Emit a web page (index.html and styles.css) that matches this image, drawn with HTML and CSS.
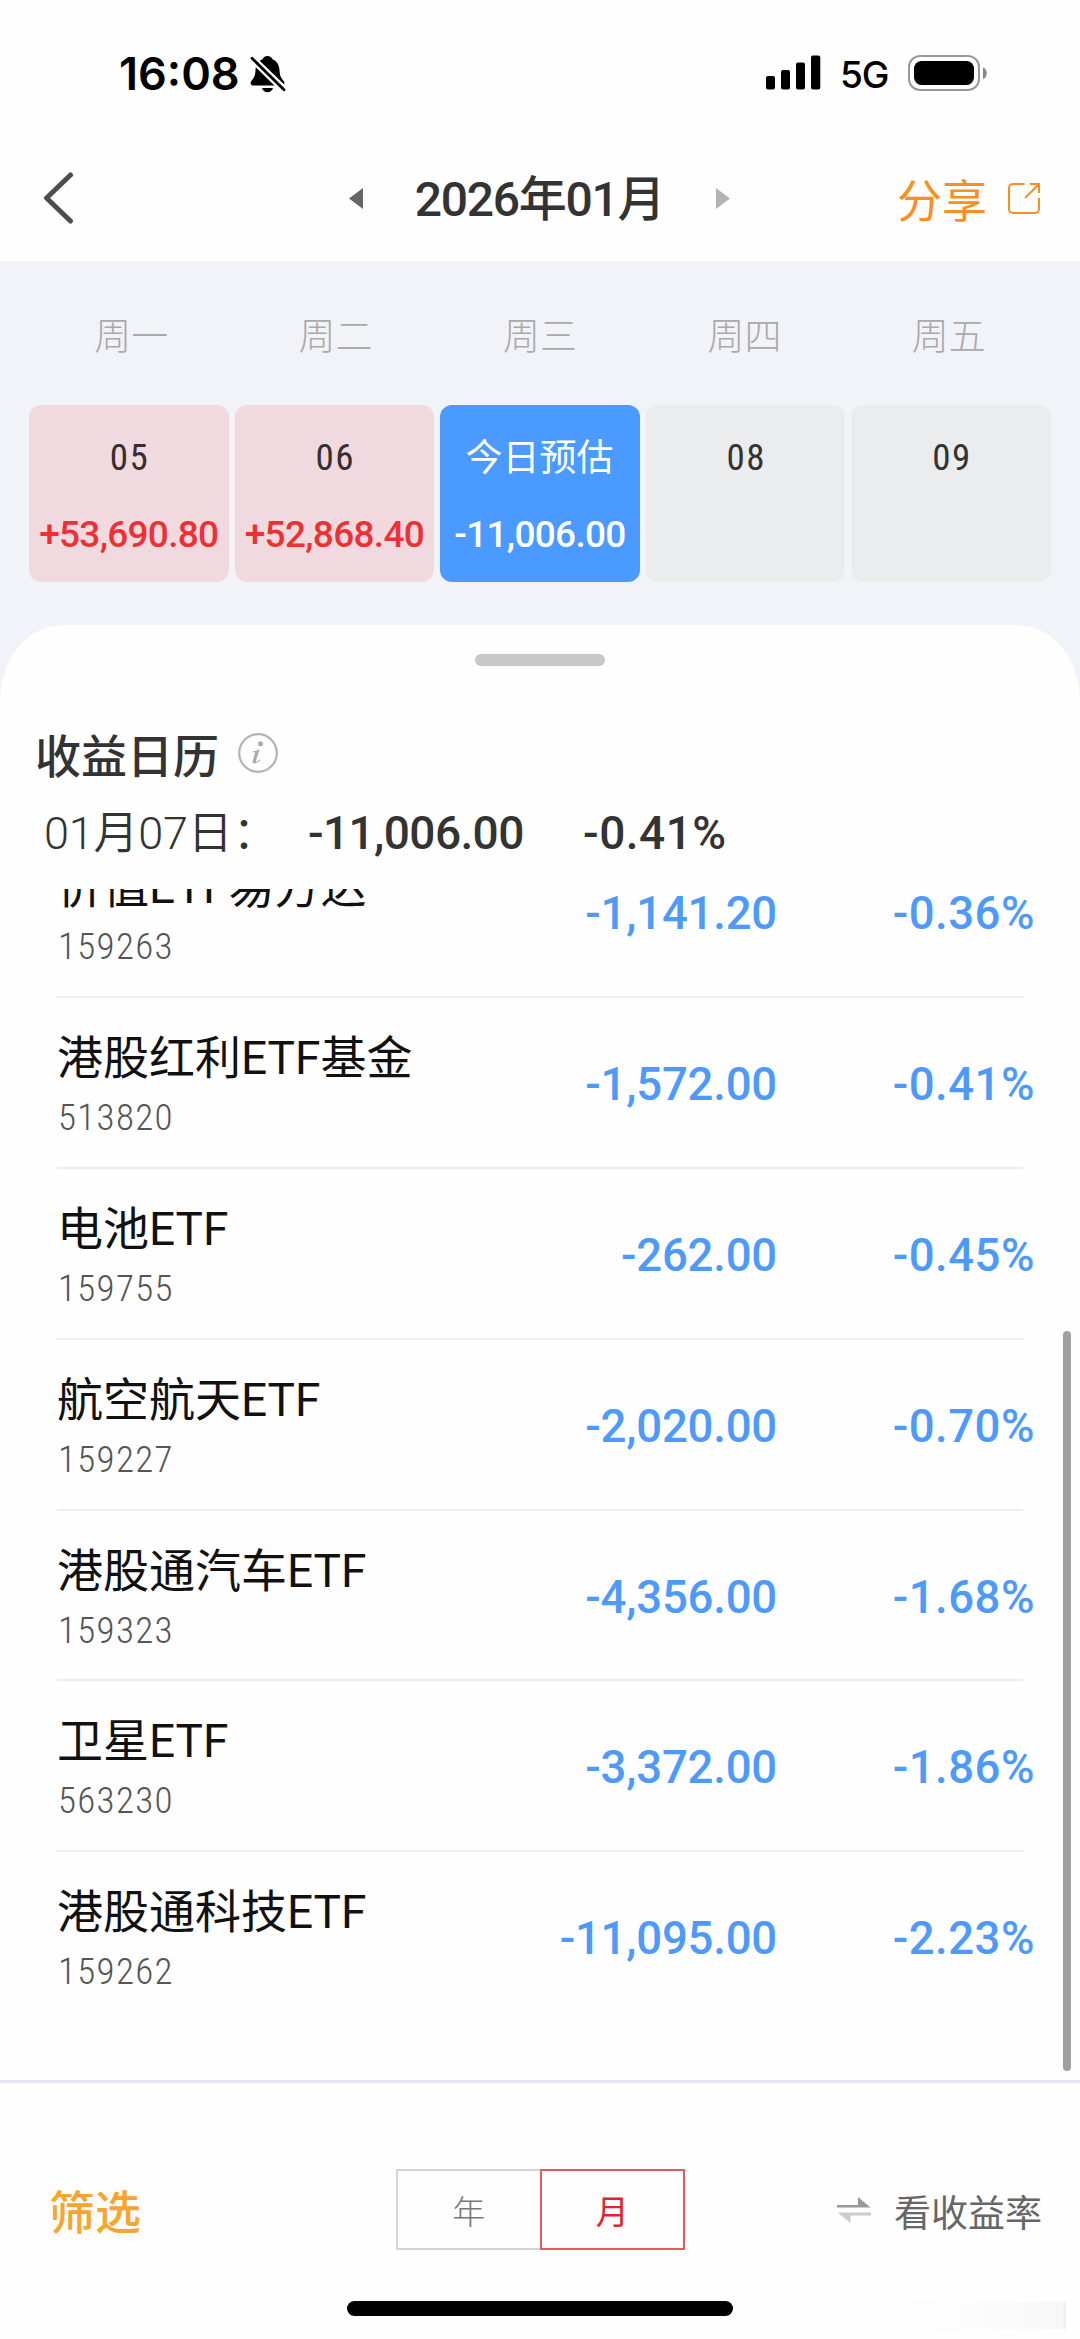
FILE: index.html
```html
<!DOCTYPE html>
<html lang="zh-CN">
<head>
<meta charset="utf-8">
<title>收益日历</title>
<link rel="stylesheet" href="styles.css">
</head>
<body>
<div class="screen">
  <header class="status">
    <span class="clock">16:08</span>
    <svg class="bell" width="36" height="38" viewBox="0 0 36 38">
      <path d="M17.500 1c2.500 0 4.300 1.300 5 3.300 4.500 2 6.700 5.800 7 11 .3 5.200 1.300 7.700 4.200 10.700 1.300 1.700.8 4.600-1.700 4.600H3c-2.500 0-3-2.900-1.700-4.600 2.900-3 3.900-5.500 4.200-10.700.3-5.200 2.500-9 7-11 .7-2 2.500-3.300 5-3.300z"/>
      <path d="M12 33h11c-.7 2.500-2.800 4.300-5.500 4.300S12.700 35.500 12 33z"/>
      <path d="M-1 .5 37 37.500" stroke="#fefefe" stroke-width="7.500"/>
      <path d="M2 3.200 34 34.800" stroke="#000" stroke-width="2.800" stroke-linecap="round"/>
    </svg>
    <svg class="signal" width="55" height="35" viewBox="0 0 55 35">
      <rect x="0" y="21" width="9" height="13.500" rx="2"/><rect x="15" y="15" width="9" height="19.500" rx="2"/>
      <rect x="30" y="7.500" width="9" height="27" rx="2"/><rect x="45" y="0.500" width="9.300" height="34" rx="2"/>
    </svg>
    <span class="net">5G</span>
    <svg class="battery" width="80" height="36" viewBox="0 0 80 36">
      <rect x="1" y="1" width="70" height="34" rx="11" fill="none" stroke="#999" stroke-width="2"/>
      <rect x="6" y="6" width="60" height="24" rx="7.500"/>
      <path d="M75 12.500c5 1.500 5 10 0 11.500z" fill="#888"/>
    </svg>
  </header>

  <nav class="nav">
    <svg class="back" width="32" height="54" viewBox="0 0 32 54"><path d="M27.500 4 3.500 27l24 23" fill="none" stroke="#4d4d4d" stroke-width="5" stroke-linecap="round" stroke-linejoin="round"/></svg>
    <div class="month">
      <svg width="14" height="21" viewBox="0 0 14 21"><path d="M14 0v21L0 10.500z" fill="#666"/></svg>
      <span class="month-label">2026年01月</span>
      <svg width="14" height="21" viewBox="0 0 14 21"><path d="M0 0v21l14-10.500z" fill="#b3b3b3"/></svg>
    </div>
    <div class="share">
      <span>分享</span>
      <svg width="32" height="33" viewBox="0 0 32 33" fill="none" stroke="#f98f20" stroke-width="2">
        <path d="M16.500 2H5a4 4 0 0 0-4 4v21a4 4 0 0 0 4 4h22a4 4 0 0 0 4-4V16"/><path d="M22 2h9v9M31 2 17 16"/>
      </svg>
    </div>
  </nav>

  <section class="calendar">
    <div class="weekdays"><span>周一</span><span>周二</span><span>周三</span><span>周四</span><span>周五</span></div>
    <div class="days">
      <div class="day gain"><span class="date">05</span><span class="amount">+53,690.80</span></div>
      <div class="day gain"><span class="date">06</span><span class="amount">+52,868.40</span></div>
      <div class="day today"><span class="date">今日预估</span><span class="amount">-11,006.00</span></div>
      <div class="day"><span class="date">08</span></div>
      <div class="day"><span class="date">09</span></div>
    </div>
  </section>

  <main class="sheet">
    <div class="handle"></div>
    <h1 class="title">收益日历
      <svg width="40" height="40" viewBox="0 0 40 40"><circle cx="20" cy="20" r="18.800" fill="none" stroke="#b3b3b3" stroke-width="2.200"/><circle cx="22.500" cy="10.800" r="2.500" fill="#aaa"/><path d="M14.500 18.500c2.500-.2 4.800-1.200 7-2.200l-3.600 11.700c-.4 1.600 1.400 1 3.600-1.500l.8.800c-2.600 3.300-8.600 4.700-7.600.7l2.400-8c.3-1.200-1-.8-2.600-.7z" fill="#aaa"/></svg>
    </h1>
    <div class="summary"><span class="day-label">01月07日：</span><span class="sum">-11,006.00</span><span class="sum percent">-0.41%</span></div>
    <div class="viewport">
      <ul class="list">
        <li class="row"><div class="fund"><span class="name">价值ETF易方达</span><span class="code">159263</span></div><span class="value">-1,141.20</span><span class="rate">-0.36%</span></li>
        <li class="row"><div class="fund"><span class="name">港股红利ETF基金</span><span class="code">513820</span></div><span class="value">-1,572.00</span><span class="rate">-0.41%</span></li>
        <li class="row"><div class="fund"><span class="name">电池ETF</span><span class="code">159755</span></div><span class="value">-262.00</span><span class="rate">-0.45%</span></li>
        <li class="row"><div class="fund"><span class="name">航空航天ETF</span><span class="code">159227</span></div><span class="value">-2,020.00</span><span class="rate">-0.70%</span></li>
        <li class="row"><div class="fund"><span class="name">港股通汽车ETF</span><span class="code">159323</span></div><span class="value">-4,356.00</span><span class="rate">-1.68%</span></li>
        <li class="row"><div class="fund"><span class="name">卫星ETF</span><span class="code">563230</span></div><span class="value">-3,372.00</span><span class="rate">-1.86%</span></li>
        <li class="row"><div class="fund"><span class="name">港股通科技ETF</span><span class="code">159262</span></div><span class="value">-11,095.00</span><span class="rate">-2.23%</span></li>
      </ul>
      <div class="scrollbar"></div>
    </div>
  </main>

  <footer class="footer">
    <span class="filter">筛选</span>
    <div class="segments"><span class="segment">年</span><span class="segment active">月</span></div>
    <div class="toggle">
      <svg width="34" height="26" viewBox="0 0 34 26"><path d="M0 8h21V0l12.500 10.500H0z" fill="#999"/><path d="M34 15.500H0.500L13.500 26v-7.500H34z" fill="#ccc"/></svg>
      <span>看收益率</span>
    </div>
    <div class="home"></div>
    <div class="smudge"></div>
  </footer>
</div>
</body>
</html>
```
FILE: styles.css
```css
* { box-sizing: border-box; }
body { margin: 0; background: #fff; font-family: Roboto, "Noto Sans CJK SC", sans-serif; color: #333; }
svg { display: block; flex: none; }
.screen { width: 1080px; height: 2339px; display: flex; flex-direction: column; overflow: hidden; background: #fefefe; }

.status { height: 137px; padding: 55px 92px 0 119px; display: flex; align-items: flex-start; color: #000; font-family: Inter, sans-serif; }
.clock { font-size: 45px; font-weight: 600; line-height: 37px; width: 131px; white-space: nowrap; }
.signal { margin-left: 480px; }
.net { margin-left: 19px; width: 68px; font-size: 37px; font-weight: 500; line-height: 39px; letter-spacing: -1px; }

.nav { height: 124px; padding: 0 40px 2px 43px; display: grid; grid-template-columns: 1fr auto 1fr; align-items: center; }
.month { display: flex; align-items: center; gap: 52px; padding-right: 4px; }
.month-label { font-size: 48px; font-weight: 500; letter-spacing: -1.300px; line-height: 60px; white-space: nowrap; padding-top: 4px; }
.share { display: flex; justify-content: flex-end; align-items: center; gap: 21px; color: #f98f20; font-size: 45px; }

.calendar { height: 364px; background: #f2f3f9; padding: 52px 29px 0; }
.weekdays { display: grid; grid-template-columns: repeat(5, 1fr); text-align: center; font-size: 37px; line-height: 50px; font-weight: 300; color: #aaa; }
.days { margin-top: 42px; display: grid; grid-template-columns: repeat(5, 1fr); gap: 6px; }
.day { height: 177px; border-radius: 12px; background: #ebecee; display: flex; flex-direction: column; align-items: center; padding-top: 28px; }
.date { font-size: 37px; line-height: 50px; font-weight: 400; font-stretch: 87.5%; letter-spacing: 1.500px; margin-right: -1.500px; }
.today .date { letter-spacing: 0; padding-top: 1px; margin: 0 1px -1px 0; }
.amount { margin: 27px 0 0; font-size: 37px; line-height: 50px; font-weight: 500; letter-spacing: -0.700px; }
.gain { background: #f1dadf; }
.gain .amount { color: #ee3035; }
.gain .date { color: #382d30; }
.today { background: #4b9aff; color: #fff; }

.sheet { height: 1455px; background: #fefefe; display: flex; flex-direction: column; position: relative; }
.sheet::before, .sheet::after { content: ""; position: absolute; top: 0; width: 62px; height: 75px; }
.sheet::before { left: 0; background: radial-gradient(ellipse 62px 75px at 100% 100%, #fefefe 99%, #f2f3f9 100%); }
.sheet::after { right: 0; background: radial-gradient(ellipse 62px 75px at 0 100%, #fefefe 99%, #f2f3f9 100%); }
.handle { width: 130px; height: 12px; margin: 29px auto 0; border-radius: 6px; background: #c8c8c8; }
.title { margin: 57px 0 0 35px; height: 60px; display: flex; align-items: center; gap: 19px; font-size: 46px; font-weight: 500; }
.summary { margin-top: 20px; padding-left: 44px; height: 60px; display: flex; align-items: center; font-size: 46px; line-height: 60px; }
.day-label { width: 264px; padding-top: 1px; font-size: 45px; white-space: nowrap; font-weight: 350; letter-spacing: -0.200px; }
.sum { font-weight: 500; width: 275px; letter-spacing: -0.600px; }
.percent { letter-spacing: 0.500px; }
.viewport { margin-top: 26px; height: 1191px; overflow: hidden; position: relative; display: flex; flex-direction: column; justify-content: flex-end; }
.list { list-style: none; margin: 0 0 59px; padding: 0 45px 0 57px; }
.row { height: 170.800px; display: grid; grid-template-columns: 419px 301px 1fr; align-items: center; position: relative; }
.row + .row::before { content: ""; position: absolute; top: 0; left: 0; width: 966px; height: 2px; background: #eeeeee; }
.fund { display: flex; flex-direction: column; padding-top: 13px; }
.name { font-size: 46px; line-height: 60px; color: #111; white-space: nowrap; }
.code { padding-left: 1px; font-size: 37px; line-height: 60px; font-weight: 300; font-stretch: 87.5%; letter-spacing: 1.300px; color: #555; }
.value, .rate { font-size: 45.500px; font-weight: 500; color: #4d9afa; text-align: right; padding-top: 7px; line-height: 44px; letter-spacing: -0.200px; }
.rate { letter-spacing: 0.500px; }
.scrollbar { position: absolute; right: 9px; top: 442px; width: 8px; height: 740px; border-radius: 4px; background: #a0a0a0; }

.footer { height: 259px; border-top: 3px solid #e5e6f0; padding: 86px 38px 0 49px; display: grid; grid-template-columns: 347px 289px 1fr; align-content: start; align-items: center; position: relative; }
.filter { color: #f7a52d; font-size: 46px; font-weight: 500; height: 81px; line-height: 89px; }
.segments { display: flex; height: 81px; }
.segment { flex: 1; border: 2px solid #d4d4d4; border-right: 0; display: flex; align-items: center; justify-content: center; font-size: 33px; font-weight: 300; color: #777; }
.segment.active { border: 2px solid #e55a5a; color: #e6202c; font-weight: 400; }
.toggle { display: flex; align-items: center; justify-content: flex-end; gap: 23px; font-size: 37px; color: #666; }
.toggle span { padding-top: 2px; }
.home { grid-column: 1 / -1; width: 386px; height: 15px; border-radius: 8px; background: #000; margin: 51px 0 0 298px; }
.smudge { position: absolute; right: 14px; bottom: 10px; width: 176px; height: 27px; background: linear-gradient(90deg, #fefefe, #fbfbfb 60%, #f7f7f7 98%, #ececec); }
```
